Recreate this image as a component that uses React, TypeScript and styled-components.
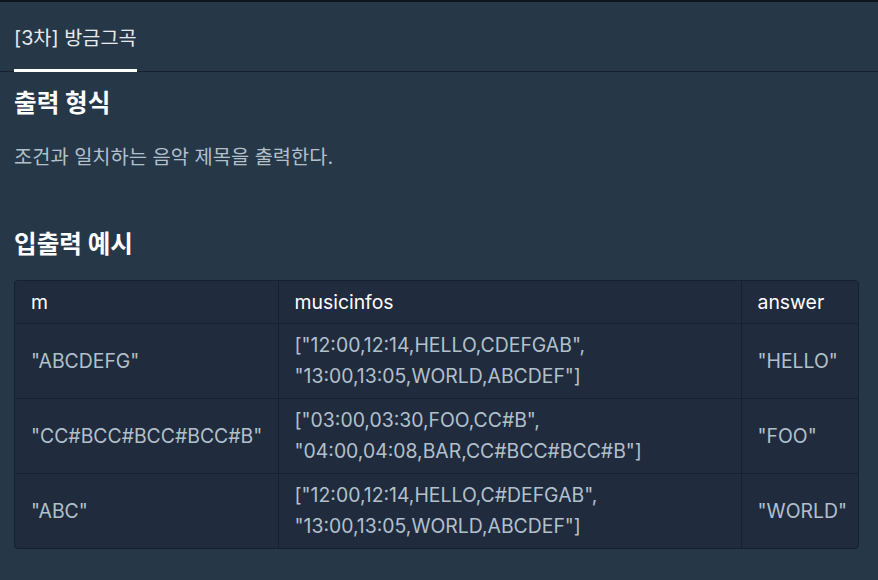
import React from "react";
import styled, {createGlobalStyle} from "styled-components";

const GlobalStyle = createGlobalStyle`
    html, body {
        margin: 0;
        padding: 0;
        background: #263747;
    }
    body {
        font-family: Inter, "Noto Sans CJK KR", sans-serif;
        -webkit-font-smoothing: antialiased;
    }
`;

const Page = styled.div`
    width: 878px;
    height: 580px;
    box-sizing: border-box;
    border-top: 2px solid #0c151d;
    background: #263747;
    overflow: hidden;
`;

const TabBar = styled.div`
    height: 70px;
    box-sizing: border-box;
    border-bottom: 1px solid #172030;
    padding: 0 14px;
    display: flex;
`;

const Tab = styled.div<{ active?: boolean }>`
    height: 70px;
    box-sizing: border-box;
    padding-top: 2px;
    display: flex;
    align-items: center;
    font-size: 19.7px;
    color: #e6ebf0;
    border-bottom: 3px solid ${({active}) => (active ? "#ffffff" : "transparent")};
`;

const Content = styled.div`
    padding: 0 14px;
`;

const Heading = styled.h2<{ gap: number }>`
    margin: ${({gap}) => gap}px 0 0;
    font-size: 24.6px;
    line-height: 28px;
    font-weight: 700;
    color: #ffffff;
`;

const Paragraph = styled.p`
    margin: 27px 0 0;
    font-size: 19.8px;
    line-height: 26px;
    color: #b2c0cc;
`;

const TableWrap = styled.div`
    margin-top: 22px;
    width: 845px;
    box-sizing: border-box;
    border: 1px solid #172030;
    border-radius: 4px;
    overflow: hidden;
    background: #202b3d;
`;

const Table = styled.table`
    width: 100%;
    border-collapse: collapse;
    table-layout: fixed;
`;

const Th = styled.th`
    text-align: left;
    font-weight: 400;
    font-size: 19.4px;
    line-height: 32px;
    padding: 5px 16px;
    color: #ffffff;
    border-left: 1px solid #172030;
    border-bottom: 1px solid #172030;

    &:first-child {
        border-left: none;
    }
`;

const Td = styled.td`
    font-size: 19.4px;
    line-height: 31px;
    padding: 6px 16px;
    color: #b2c0cc;
    vertical-align: middle;
    border-left: 1px solid #172030;
    border-top: 1px solid #172030;
    white-space: nowrap;

    &:first-child {
        border-left: none;
    }
`;

const rows = [
    {m: "\"ABCDEFG\"", infos: ["[\"12:00,12:14,HELLO,CDEFGAB\",", "\"13:00,13:05,WORLD,ABCDEF\"]"], answer: "\"HELLO\""},
    {m: "\"CC#BCC#BCC#BCC#B\"", infos: ["[\"03:00,03:30,FOO,CC#B\",", "\"04:00,04:08,BAR,CC#BCC#BCC#B\"]"], answer: "\"FOO\""},
    {m: "\"ABC\"", infos: ["[\"12:00,12:14,HELLO,C#DEFGAB\",", "\"13:00,13:05,WORLD,ABCDEF\"]"], answer: "\"WORLD\""},
];

export default function App(): React.JSX.Element {
    return (
        <Page>
            <GlobalStyle/>
            <TabBar>
                <Tab active>[3차] 방금그곡</Tab>
            </TabBar>
            <Content>
                <Heading gap={17}>출력 형식</Heading>
                <Paragraph>조건과 일치하는 음악 제목을 출력한다.</Paragraph>
                <Heading gap={60}>입출력 예시</Heading>
                <TableWrap>
                    <Table>
                        <colgroup>
                            <col style={{width: 263}}/>
                            <col style={{width: 463}}/>
                            <col/>
                        </colgroup>
                        <thead>
                        <tr>
                            <Th>m</Th>
                            <Th>musicinfos</Th>
                            <Th>answer</Th>
                        </tr>
                        </thead>
                        <tbody>
                        {rows.map((r) => (
                            <tr key={r.m}>
                                <Td>{r.m}</Td>
                                <Td>{r.infos[0]}<br/>{r.infos[1]}</Td>
                                <Td>{r.answer}</Td>
                            </tr>
                        ))}
                        </tbody>
                    </Table>
                </TableWrap>
            </Content>
        </Page>
    );
}
